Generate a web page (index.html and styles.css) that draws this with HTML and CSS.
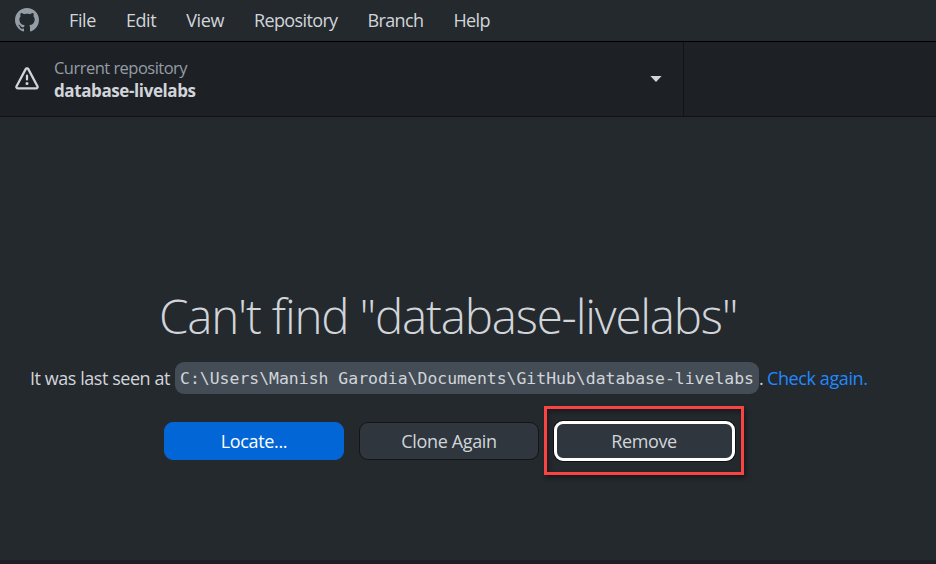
FILE: index.html
```html
<!DOCTYPE html>
<html lang="en">
<head>
<meta charset="utf-8">
<title>GitHub Desktop</title>
<link rel="stylesheet" href="styles.css">
</head>
<body>
<div class="app">
  <header class="menubar">
    <svg class="logo" viewBox="0 0 16 16" aria-hidden="true"><path fill-rule="evenodd" d="M8 0C3.58 0 0 3.58 0 8c0 3.54 2.29 6.53 5.47 7.59.4.07.55-.17.55-.38 0-.19-.01-.82-.01-1.49-2.01.37-2.53-.49-2.69-.94-.09-.23-.48-.94-.82-1.13-.28-.15-.68-.52-.01-.53.63-.01 1.08.58 1.23.82.72 1.21 1.87.87 2.33.66.07-.52.28-.87.51-1.07-1.78-.2-3.64-.89-3.64-3.95 0-.87.31-1.59.82-2.15-.08-.2-.36-1.02.08-2.12 0 0 .67-.21 2.2.82.64-.18 1.32-.27 2-.27s1.36.09 2 .27c1.53-1.04 2.2-.82 2.2-.82.44 1.1.16 1.92.08 2.12.51.56.82 1.27.82 2.15 0 3.07-1.87 3.75-3.65 3.95.29.25.54.73.54 1.48 0 1.07-.01 1.93-.01 2.2 0 .21.15.46.55.38A8.01 8.01 0 0 0 16 8c0-4.42-3.58-8-8-8z"/></svg>
    <nav class="menu">
      <span>File</span><span>Edit</span><span>View</span><span class="tight">Repository</span><span class="tight">Branch</span><span class="tight">Help</span>
    </nav>
  </header>
  <div class="toolbar">
    <div class="repo">
      <svg class="alert" viewBox="0 0 16 16" aria-hidden="true"><path fill-rule="evenodd" d="M8.22 1.754a.25.25 0 0 0-.44 0L1.698 13.132a.25.25 0 0 0 .22.368h12.164a.25.25 0 0 0 .22-.368L8.22 1.754zm-1.763-.707c.659-1.234 2.427-1.234 3.086 0l6.082 11.378A1.75 1.75 0 0 1 14.082 15H1.918a1.75 1.75 0 0 1-1.543-2.575L6.457 1.047zM9 11a1 1 0 1 1-2 0 1 1 0 0 1 2 0zm-.25-5.25a.75.75 0 0 0-1.5 0v2.5a.75.75 0 0 0 1.5 0v-2.5z"/></svg>
      <div class="repo-text">
        <span class="label">Current repository</span>
        <strong class="name">database-livelabs</strong>
      </div>
      <svg class="caret" viewBox="0 0 12 6" aria-hidden="true"><path d="M.4 0h11.2L6 6z"/></svg>
    </div>
  </div>
  <main class="missing">
    <h1 class="title">Can't find "database-livelabs"</h1>
    <p class="seen"><span class="lead">It was last seen at</span><code class="path">C:\Users\Manish Garodia\Documents\GitHub\database-livelabs</code><span class="dot">.</span><a class="link">Check again.</a></p>
    <div class="actions">
      <button class="btn primary">Locate...</button>
      <button class="btn">Clone Again</button>
      <div class="highlight"><button class="btn focused">Remove</button></div>
    </div>
  </main>
  <footer class="edge"></footer>
</div>
</body>
</html>
```
FILE: styles.css
```css
* { box-sizing: border-box; }
body {
  margin: 0;
  background: #24292e;
  color: #d1d5da;
  font-family: "Segoe UI", "Open Sans", sans-serif;
  font-size: 18px;
}
.app { display: flex; flex-direction: column; width: 936px; height: 564px; overflow: hidden; }
.menubar {
  display: flex;
  align-items: center;
  height: 42px;
  padding: 0 0 1px 15px;
  border-bottom: 1px solid #000;
}
.logo { width: 24px; height: 24px; fill: #959da5; }
.menu { display: flex; margin-left: 30px; gap: 30px; line-height: 24px; white-space: nowrap; }
.menu span { letter-spacing: -0.4px; }
.menu .tight { letter-spacing: -0.63px; }
.toolbar { display: flex; height: 75px; background: #1d2125; border-bottom: 1px solid #101214; }
.repo {
  display: flex;
  align-items: center;
  width: 684px;
  padding: 0 21px 0 15px;
  border-right: 1px solid #101214;
}
.alert { width: 24px; height: 24px; fill: #d1d5da; }
.repo-text { display: flex; flex-direction: column; flex: 1; margin-left: 15px; line-height: 22px; }
.repo-text span, .repo-text strong { align-self: flex-start; white-space: nowrap; }
.label { color: #959da5; font-size: 16.5px; letter-spacing: -0.52px; }
.name { padding-top: 1px; margin-bottom: -1px; font-size: 17px; font-weight: 700; letter-spacing: -0.4px; }
.caret { width: 12px; height: 6px; fill: #d1d5da; }
.missing { flex: 1; padding-top: 167px; }
.title {
  margin: 0 0 0 159px;
  height: 64px;
  line-height: 64px;
  font-size: 47.5px;
  font-weight: 300;
  letter-spacing: -1.2px;
  white-space: nowrap;
}
.seen { display: flex; align-items: center; height: 32px; margin: 14px 0 0 30px; white-space: nowrap; }
.lead { width: 145px; letter-spacing: -0.45px; }
.path {
  width: 584px;
  height: 32px;
  padding: 1px 0 0 5px;
  border-radius: 9px;
  background: #444d56;
  font: 16.45px/32px "DejaVu Sans Mono", monospace;
}
.dot { width: 8px; }
.link { color: #2188ff; letter-spacing: -0.4px; }
.actions { display: flex; margin: 12px 0 0 164px; }
.btn {
  width: 180px;
  height: 38px;
  margin: 16px 15px 0 0;
  padding: 0;
  border: 1px solid #141414;
  border-radius: 9px;
  background: #2f363d;
  color: #d1d5da;
  font: inherit;
  letter-spacing: -0.35px;
}
.primary { border-color: #0366d6; background: #0366d6; color: #fff; }
.highlight {
  width: 200px;
  height: 69px;
  margin-left: -10px;
  padding: 12px 0 0 6.5px;
  border: 3px solid #fa4343;
  box-shadow: 2px 3px 5px rgba(0, 0, 0, .4), inset 2px 3px 5px rgba(0, 0, 0, .35);
}
.focused {
  display: block;
  width: 181px;
  height: 40px;
  margin: 0;
  border: 3px solid #fff;
  box-shadow: 0 0 0 1px #101010;
}
.edge { height: 4px; background: #1f1d25; }
```
